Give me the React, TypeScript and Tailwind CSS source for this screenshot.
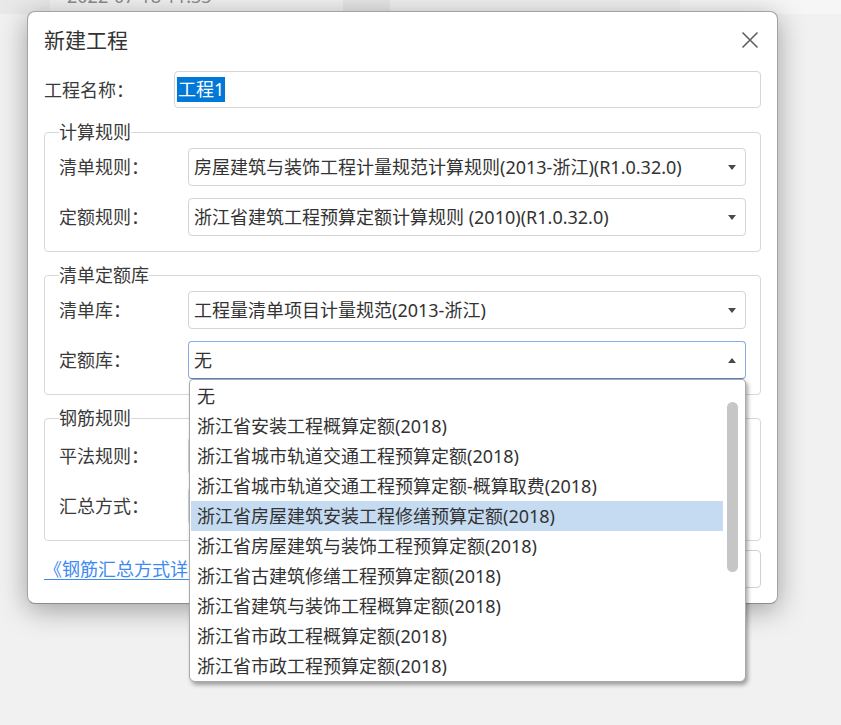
import React from "react";

const FONT = "font-['Noto_Sans','Noto_Sans_CJK_SC',sans-serif]";

function Caret({ up }: { up?: boolean }) {
  return (
    <svg width="8" height="5" viewBox="0 0 8 5" className="shrink-0">
      <path d={up ? "M0 5 L4 0 L8 5Z" : "M0 0 L8 0 L4 5Z"} fill="#4a4a4a" />
    </svg>
  );
}

function SelectBox({ value, focused }: { value: string; focused?: boolean }) {
  return (
    <div
      className={
        "flex h-[38px] flex-1 items-center justify-between rounded-[4px] border bg-white pl-[5px] pr-[9px] " +
        (focused ? "border-[#86ace6] border-b-[#5b85c8]" : "border-[#d4d4d4]")
      }
    >
      <span className="truncate text-[18px] leading-[24px] text-[#333]">{value}</span>
      <Caret up={focused} />
    </div>
  );
}

function Row({ label, children }: { label: string; children: React.ReactNode }) {
  return (
    <div className="flex items-center">
      <div className="w-[129px] shrink-0 text-[18px] leading-[24px] text-[#3a3a3a]">{label}</div>
      {children}
    </div>
  );
}

function Group({ title, children, tall }: { title: string; children: React.ReactNode; tall?: boolean }) {
  return (
    <fieldset
      className={
        "rounded-[4px] border border-[#d8d8d8] px-[14px] pb-[15px] " + (tall ? "pt-[7px]" : "pt-[4px]")
      }
    >
      <legend className="px-0 text-[18px] leading-[24px] text-[#3a3a3a]">{title}</legend>
      <div className="flex flex-col gap-[12px]">{children}</div>
    </fieldset>
  );
}

const ITEMS = [
  "无",
  "浙江省安装工程概算定额(2018)",
  "浙江省城市轨道交通工程预算定额(2018)",
  "浙江省城市轨道交通工程预算定额-概算取费(2018)",
  "浙江省房屋建筑安装工程修缮预算定额(2018)",
  "浙江省房屋建筑与装饰工程预算定额(2018)",
  "浙江省古建筑修缮工程预算定额(2018)",
  "浙江省建筑与装饰工程概算定额(2018)",
  "浙江省市政工程概算定额(2018)",
  "浙江省市政工程预算定额(2018)",
];

function Popup() {
  return (
    <div className="absolute left-[1px] right-0 top-full z-20 flex rounded-b-[6px] rounded-t-[4px] border border-[#a9a9a9] bg-white shadow-[2px_3px_4px_rgba(0,0,0,0.35)]">
      <div className="flex flex-1 flex-col pl-[1px] pt-[1px]">
        {ITEMS.map((t, i) => (
          <div
            key={t}
            className={
              "h-[30px] pl-[6px] text-[18px] leading-[30px] text-[#333] " +
              (i === 4 ? "bg-[#c5dbf1]" : "")
            }
          >
            {t}
          </div>
        ))}
      </div>
      <div className="w-[22px] shrink-0 pl-[4px] pt-[22px]">
        <div className="h-[170px] w-[11px] rounded-full bg-[#c6c6c6]" />
      </div>
    </div>
  );
}

export default function App() {
  return (
    <div className={"relative h-[725px] w-[841px] overflow-hidden bg-[#f1f1f2] " + FONT}>
      {/* background application (only its lower edge shows above the dialog) */}
      <div className="flex h-[14px]">
        <div className="w-[50px] bg-[#e9e9e9]" />
        <div className="w-[293px] overflow-hidden bg-[#f1f1f1]">
          <div className="-mt-[16px] pl-[17px] text-[18px] leading-[24px] text-[#8a8a8a]">2022-07-18 11:33</div>
        </div>
        <div className="w-[47px] bg-[#e6e6e6]" />
        <div className="w-[290px] bg-[#f0f0f0]" />
        <div className="flex-1 bg-[#f6f6f7]" />
      </div>

      {/* dialog */}
      <div className="absolute left-[27px] top-[11px] flex h-[593px] w-[751px] flex-col rounded-[8px] border border-[#a3a3a3] border-b-[#8c8c8c] bg-white pl-[16px] pr-[16px] pt-[13px] shadow-[0_6px_28px_rgba(0,0,0,0.34)]">
        <div className="flex h-[30px] items-center justify-between">
          <span className="text-[21px] leading-[30px] text-[#333]">新建工程</span>
          <svg width="18" height="18" viewBox="0 0 18 18" className="mr-[2px]">
            <path d="M1.5 1.5 L16.5 16.5 M16.5 1.5 L1.5 16.5" stroke="#606060" strokeWidth="1.6" />
          </svg>
        </div>

        <div className="mt-[16px] flex items-center">
          <div className="w-[130px] shrink-0 text-[18px] leading-[24px] text-[#3a3a3a]">工程名称：</div>
          <div className="flex h-[37px] flex-1 items-center rounded-[4px] border border-[#d6d6d6] pl-[2px]">
            <span className="bg-[#0078d7] px-[1px] text-[18px] leading-[25px] text-white">工程1</span>
          </div>
        </div>

        <div className="mt-[12px]">
          <Group title="计算规则">
            <Row label="清单规则：">
              <SelectBox value="房屋建筑与装饰工程计量规范计算规则(2013-浙江)(R1.0.32.0)" />
            </Row>
            <Row label="定额规则：">
              <SelectBox value="浙江省建筑工程预算定额计算规则 (2010)(R1.0.32.0)" />
            </Row>
          </Group>
        </div>

        <div className="mt-[11px]">
          <Group title="清单定额库">
            <Row label="清单库：">
              <SelectBox value="工程量清单项目计量规范(2013-浙江)" />
            </Row>
            <Row label="定额库：">
              <div className="relative flex flex-1">
                <SelectBox value="无" focused />
                <Popup />
              </div>
            </Row>
          </Group>
        </div>

        <div className="mt-[11px]">
          <Group title="钢筋规则" tall>
            <Row label="平法规则：">
              <SelectBox value="" />
            </Row>
            <Row label="汇总方式：">
              <SelectBox value="" />
            </Row>
          </Group>
        </div>

        <div className="mt-[9px] flex h-[38px] items-center justify-between">
          <span className="text-[18px] leading-[24px] text-[#3d8bf2] underline underline-offset-[3px]">《钢筋汇总方式详解》</span>
          <div className="flex gap-[10px]">
            <div className="flex h-[38px] w-[90px] items-center justify-center rounded-[4px] border border-[#d0d0d0] text-[18px] text-[#333]">确定</div>
            <div className="flex h-[38px] w-[90px] items-center justify-center rounded-[4px] border border-[#d0d0d0] text-[18px] text-[#333]">取消</div>
          </div>
        </div>
      </div>
    </div>
  );
}
